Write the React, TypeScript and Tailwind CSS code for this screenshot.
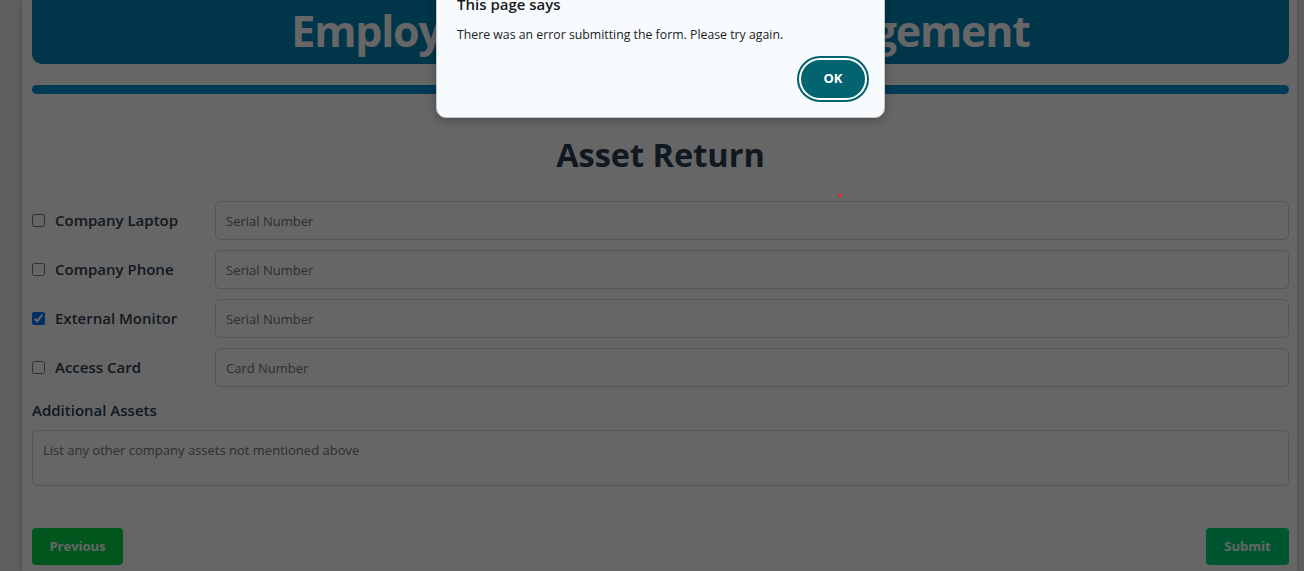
import { useState } from "react";

const assets = [
  { label: "Company Laptop", placeholder: "Serial Number", checked: false },
  { label: "Company Phone", placeholder: "Serial Number", checked: false },
  { label: "External Monitor", placeholder: "Serial Number", checked: true },
  { label: "Access Card", placeholder: "Card Number", checked: false },
];

function AssetRow(props: { label: string; placeholder: string; checked: boolean }) {
  const [on, setOn] = useState(props.checked);
  return (
    <div className="flex items-center h-[39px]">
      <label className="flex items-center w-[183px] shrink-0 cursor-pointer">
        <input
          type="checkbox"
          checked={on}
          onChange={() => setOn(!on)}
          className="w-[13px] h-[13px] mr-[10px]"
        />
        <span className="text-[15px] font-semibold text-[#2c3e50]">{props.label}</span>
      </label>
      <input
        type="text"
        placeholder={props.placeholder}
        className="flex-1 h-[39px] border border-[#d6d6d6] rounded-[5px] px-[10px] text-[13px] placeholder:text-[#757575] outline-none"
      />
    </div>
  );
}

export default function App() {
  return (
    <div
      className="relative h-[571px] overflow-hidden bg-[#ebebeb] flex"
      style={{ fontFamily: '"Open Sans", "Noto Sans", sans-serif' }}
    >
      <div className="ml-[22px] w-[1275px] bg-white shadow-[0_0_6px_rgba(0,0,0,0.18)] pl-[10px] pr-[8px]">
        <div className="mt-[-26px] h-[90px] bg-[#0085b8] rounded-[10px] flex items-end justify-center pb-[12px]">
          <h1 className="text-[43px] tracking-[-1.2px] font-bold text-white leading-none whitespace-nowrap">
            Employee Offboarding Management
          </h1>
        </div>

        <div className="mt-[21px] h-[9px] rounded-full bg-[#0094d8]" />

        <h2 className="mt-[39px] text-center text-[32.5px] font-bold text-[#2c3e50] leading-[44px]">
          Asset Return
        </h2>

        <div className="mt-[24px] flex flex-col gap-[10px]">
          {assets.map((a) => (
            <AssetRow key={a.label} {...a} />
          ))}
        </div>

        <div className="mt-[12px] text-[15px] font-semibold text-[#2c3e50]">Additional Assets</div>
        <textarea
          placeholder="List any other company assets not mentioned above"
          className="mt-[8px] block w-full h-[56px] border border-[#d6d6d6] rounded-[5px] px-[10px] py-[10px] text-[13px] placeholder:text-[#757575] resize-none outline-none"
        />

        <div className="mt-[42px] flex justify-between">
          <button className="h-[37px] w-[91px] rounded-[4px] bg-[#00d84a] text-white text-[13px] font-bold pt-[2px]">
            Previous
          </button>
          <button className="h-[37px] w-[83px] rounded-[4px] bg-[#00d47a] text-white text-[13px] font-bold pt-[2px]">
            Submit
          </button>
        </div>
      </div>

      {/* alert backdrop */}
      <div className="absolute inset-0 bg-black/60" />

      <div className="absolute left-[436px] top-[-20px] w-[449px] h-[138px] bg-[#f7fbfe] border border-[#c8c8c8] rounded-[10px] shadow-[0_2px_8px_rgba(0,0,0,0.3)] pl-[20px] pr-[17px] pt-[12px]">
        <div className="text-[15px] font-semibold text-[#1b1b1b]">This page says</div>
        <div className="mt-[10px] text-[12.3px] text-[#1b1b1b]">
          There was an error submitting the form. Please try again.
        </div>
        <div className="mt-[14px] flex justify-end">
          <button className="h-[42px] w-[68px] rounded-full bg-[#03636e] border-2 border-white outline-2 outline-[#03636e] text-white text-[13px] font-bold">
            OK
          </button>
        </div>
      </div>

      <div className="absolute left-[838px] top-[194px] w-[3px] h-[3px] bg-[#ff1a1a]" />
    </div>
  );
}
